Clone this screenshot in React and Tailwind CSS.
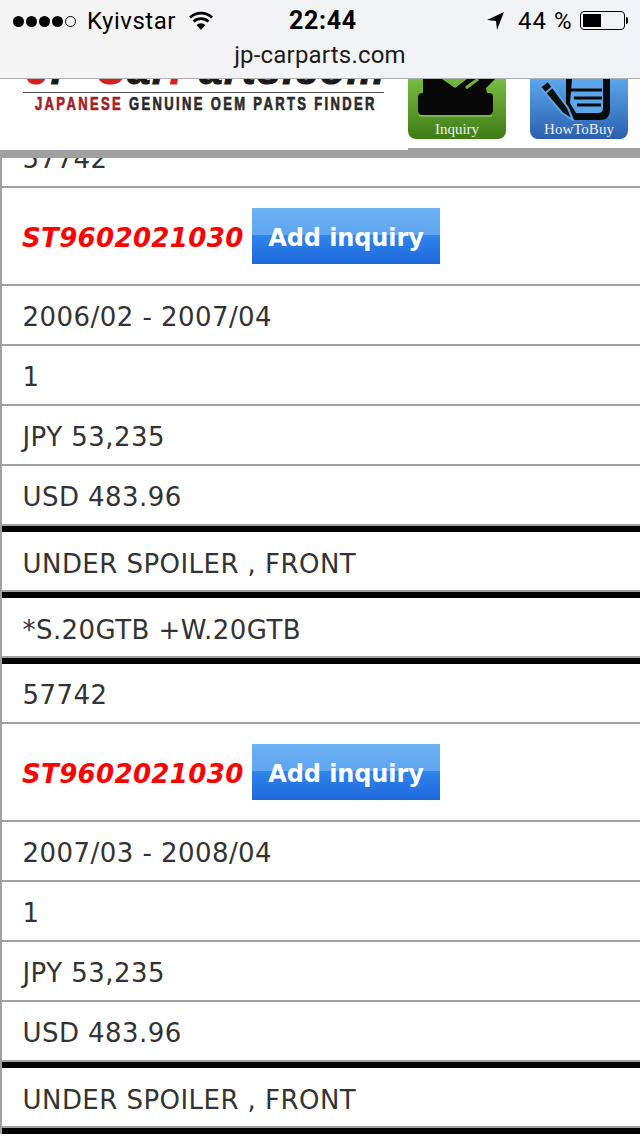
import { Fragment } from "react";

const parts = [
  { period: "2006/02 - 2007/04" },
  { period: "2007/03 - 2008/04" },
];

function Row({ children }) {
  return (
    <div className="h-[60px] border-l-2 border-b-2 border-[#a0a0a0] pl-[20.5px] flex items-center">
      <span className="pt-[5px]">{children}</span>
    </div>
  );
}

function Heavy({ children }) {
  return (
    <div className="h-[66px] border-l-2 border-[#a0a0a0]">
      <div className="h-[58px] pl-[20.5px] flex items-center">
        <span className="pt-[6px]">{children}</span>
      </div>
      <div className="h-[2px] bg-[#a0a0a0] -ml-[2px]" />
      <div className="h-[6px] bg-black" />
    </div>
  );
}

function PartNumber() {
  return (
    <div className="h-[98px] border-l-2 border-b-2 border-[#a0a0a0] pl-5 flex items-start pt-5 tracking-normal">
      <span className="w-[230px] h-14 flex items-center pt-[4px] font-bold italic text-[#ff0000] text-[26px] tracking-[0.35px]">
        ST9602021030
      </span>
      <button className="w-[188px] h-14 pt-[3px] text-white font-bold text-[24px] tracking-[-0.1px] bg-[linear-gradient(#6db1f3_0%,#5fa6f0_48%,#2f84ec_49%,#1f68dc_100%)]">
        Add inquiry
      </button>
    </div>
  );
}

function StatusBar() {
  return (
    <div className="h-[79px] bg-gradient-to-r from-[#f5f4f4] to-[#f0f3f7] border-b border-[#b0b0b0] text-black font-['Roboto','Liberation_Sans',sans-serif] shrink-0 tracking-normal">
      <div className="h-[42px] flex items-center px-[13px] relative text-[24px]">
        <div className="flex gap-[2px] items-center">
          {[0, 1, 2, 3].map((i) => (
            <span key={i} className="w-[11px] h-[11px] rounded-full bg-black" />
          ))}
          <span className="w-[11px] h-[11px] rounded-full border border-black" />
        </div>
        <span className="ml-[11px] tracking-[0.5px]">Kyivstar</span>
        <svg className="ml-[12px]" width="26" height="20" viewBox="0 0 26 20">
          <path d="M13 19 L8.5 14 A6.5 6.5 0 0 1 17.5 14 Z" fill="#000" />
          <path d="M5.5 10.5 A11 11 0 0 1 20.5 10.5" fill="none" stroke="#000" strokeWidth="2.8" />
          <path d="M2 6.5 A16 16 0 0 1 24 6.5" fill="none" stroke="#000" strokeWidth="2.8" />
        </svg>
        <span className="absolute left-[289px] font-bold text-[25px] tracking-[0.7px]">22:44</span>
        <svg className="absolute left-[486px]" width="20" height="20" viewBox="0 0 20 20">
          <path d="M18 1 L1 9 L10 10 L11 19 Z" fill="#000" />
        </svg>
        <span className="absolute left-[518px] tracking-[1px]">44 %</span>
        <div className="absolute left-[580px] top-[11px] w-[45px] h-[19px] border border-black rounded-[4px] p-[2px]">
          <div className="h-full w-[18px] bg-black" />
        </div>
        <div className="absolute left-[626px] top-[17px] w-[2px] h-[7px] bg-black rounded-r" />
      </div>
      <div className="text-center text-[24px] tracking-[0.2px] leading-[26px] text-[#1c1c1c]">jp-carparts.com</div>
    </div>
  );
}

function AppIcon({ label, gradient, children }) {
  return (
    <div className={`w-[98px] h-[60px] rounded-b-lg overflow-hidden relative bg-gradient-to-b ${gradient}`}>
      {children}
      <div className="absolute bottom-0 inset-x-0 text-center text-[#f0f0f0] text-[15px] leading-[20px] font-['Liberation_Serif',serif] tracking-normal">
        {label}
      </div>
    </div>
  );
}

function SiteHeader() {
  return (
    <div className="bg-[#a0a0a0] h-[79px] shrink-0 flex items-start tracking-normal">
      <div className="w-[408px] h-[71px] bg-white overflow-hidden relative">
        <div className="absolute left-[26px] -top-[32px] font-bold italic text-[42px] leading-[46px] tracking-[1.4px] [-webkit-text-stroke:1px_currentColor] font-['Liberation_Sans',sans-serif] whitespace-nowrap text-[#1a1a1a]">
          <span className="text-[#d81e1e]">J</span>P-<span className="text-[#d81e1e]">C</span>ar<span className="text-[#d81e1e]">P</span>arts.com
        </div>
        <div className="absolute left-[23px] top-[13px] w-[361px] h-[1px] bg-[#555]" />
        <div className="absolute left-[35px] top-[16px] text-[13px] leading-[14px] font-bold tracking-[2.36px] font-['Liberation_Sans',sans-serif] whitespace-nowrap scale-y-[1.4] origin-top [-webkit-text-stroke:0.5px_currentColor] text-[#2b2b2b]">
          <span className="text-[#a02028]">JAPANESE</span> GENUINE OEM PARTS FINDER
        </div>
      </div>
      <div className="flex-1 h-[69px] bg-white flex gap-6 items-start">
        <AppIcon label="Inquiry" gradient="from-[#78bc42] to-[#3f7c14]">
          <svg className="absolute left-0 top-0" width="98" height="42" viewBox="0 0 98 42">
            <path d="M15 0 H87 L78 9 L79 14 H81 Q85 14 85 18 V31 Q85 36 80 36 H15 Q10 36 10 31 V18 Q10 14 15 14 Z" fill="#080808" />
            <path d="M34 0 H59 L47 9 Z" fill="#72b53c" />
            <path d="M58 9 L70 0" stroke="#72b53c" strokeWidth="3" />
            <path d="M11 37 H84" stroke="#a4d47c" strokeWidth="1" />
          </svg>
        </AppIcon>
        <AppIcon label="HowToBuy" gradient="from-[#5ba6ea] to-[#2c5fb0]">
          <svg className="absolute left-0 top-0" width="98" height="42" viewBox="0 0 98 42">
            <path d="M36 0 H80 V31 Q80 41 70 41 H44 L36 28 Z" fill="#0a0a0a" />
            <path d="M42 0 H73 V29 Q73 34 68 34 H46 L40 24 Z" fill="#5ba6ea" />
            <path d="M40 11 H72 M44 19 H72 M47 26 H71" stroke="#0a0a0a" strokeWidth="3" />
            <path d="M10 8 L18 2 L38 29 L43 41 L32 34 Z" fill="#111" stroke="#5ba6ea" strokeWidth="2" />
            <path d="M14 15 L24 7" stroke="#5ba6ea" strokeWidth="2" />
          </svg>
        </AppIcon>
      </div>
    </div>
  );
}

export default function App() {
  return (
    <div className="w-[640px] h-[1136px] overflow-hidden bg-white flex flex-col font-['DejaVu_Sans',sans-serif] text-[#333] text-[26px] tracking-[0.45px]">
      <StatusBar />
      <SiteHeader />
      <div className="flex-1 overflow-hidden">
        <div className="h-[30px] border-l-2 border-b-2 border-[#a0a0a0] pl-[20.5px] flex items-end overflow-hidden">
          <span className="leading-[30px] h-[28px] flex items-end pb-[12px]">57742</span>
        </div>
        {parts.map((p, i) => (
          <Fragment key={p.period}>
            {i > 0 && <Row>57742</Row>}
            <PartNumber />
            <Row>{p.period}</Row>
            <Row>1</Row>
            <Row>JPY 53,235</Row>
            <Row>USD 483.96</Row>
            <div className="h-[6px] bg-black border-l-2 border-[#a0a0a0]" />
            <Heavy>UNDER SPOILER , FRONT</Heavy>
            {i === 0 && <Heavy>*S.20GTB +W.20GTB</Heavy>}
          </Fragment>
        ))}
      </div>
    </div>
  );
}
